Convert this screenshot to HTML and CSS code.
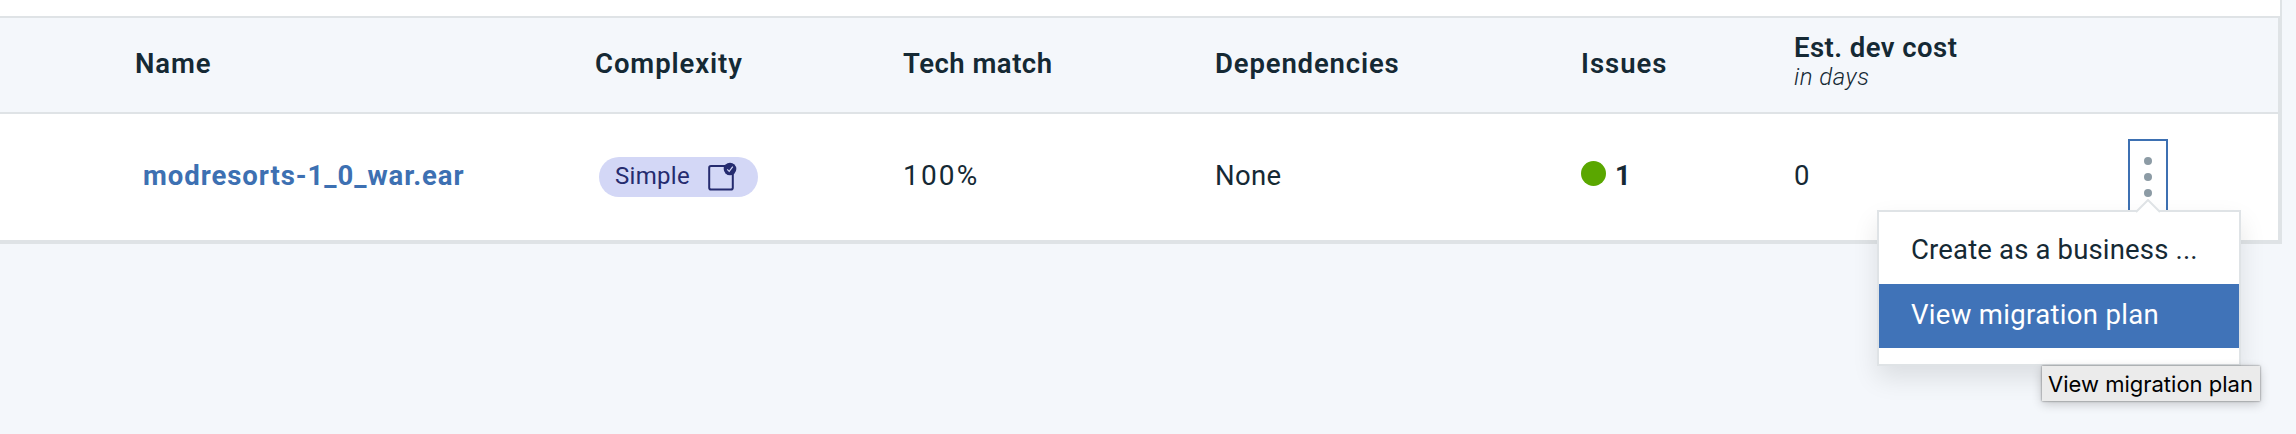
FILE: index.html
```
<!DOCTYPE html>
<html lang="en">
<head>
<meta charset="utf-8">
<title>Migration</title>
<link rel="stylesheet" href="styles.css">
</head>
<body>
<main class="panel">
  <div class="table">
    <div class="row head">
      <div><span class="h-name">Name</span></div>
      <div><span class="h-complexity">Complexity</span></div>
      <div><span class="h-tech">Tech match</span></div>
      <div><span class="h-deps">Dependencies</span></div>
      <div><span class="h-issues">Issues</span></div>
      <div class="cost"><span class="h-cost">Est. dev cost</span><em class="unit">in days</em></div>
      <div></div>
    </div>
    <div class="row body">
      <div class="cell"><a class="link">modresorts-1_0_war.ear</a></div>
      <div><div class="chip"><span class="chip-text">Simple</span>
        <svg class="chip-icon" width="30" height="30" viewBox="0 0 30 30">
          <rect x="2.2" y="4" width="23.6" height="23.6" rx="1.8" fill="none" stroke="#252b6f" stroke-width="2"/>
          <circle cx="23" cy="7" r="6.3" fill="#252b6f"/>
          <path d="M20.2 7.4l2 2 3.6-4.8" fill="none" stroke="#d3d7f6" stroke-width="1.2"/>
        </svg></div></div>
      <div class="cell"><span class="percent">100%</span></div>
      <div class="cell"><span class="none">None</span></div>
      <div class="cell issues"><span class="dot"></span><b class="count">1</b></div>
      <div class="cell"><span class="zero">0</span></div>
      <div class="actions">
        <div class="overflow">
          <svg width="8" height="40" viewBox="0 0 8 40" fill="#8c9ba5"><circle cx="4" cy="4" r="4"/><circle cx="4" cy="20" r="4"/><circle cx="4" cy="36" r="4"/></svg>
        </div>
      </div>
    </div>
  </div>
</main>
<div class="menu">
  <svg class="caret" width="26" height="14" viewBox="0 0 26 14"><path d="M1 13L13 1L25 13V14H1Z" fill="#fff"/><path d="M1 13L13 1L25 13" fill="none" stroke="#dfe3e6" stroke-width="2"/></svg>
  <div class="item"><span class="create">Create as a business ...</span></div>
  <div class="item active"><span class="view">View migration plan</span></div>
</div>
<div class="tooltip"><span class="tip-text">View migration plan</span></div>
</body>
</html>
```
FILE: styles.css
```
* { box-sizing: border-box; }
body {
  margin: 0;
  height: 434px;
  overflow: hidden;
  background: #f4f7fb;
  color: #152934;
  font: 400 27.5px/36px Roboto, sans-serif;
  white-space: nowrap;
}
.panel {
  width: 2282px;
  height: 244px;
  padding-top: 16px;
  background: #fff;
  border-right: 2px solid #dfe3e6;
  border-bottom: 2px solid #dfe3e6;
}
.table {
  border: solid #dfe3e6;
  border-width: 2px 2px 2px 0;
}
.row {
  display: grid;
  grid-template-columns: 460px 308px 312px 366px 213px 334px 1fr;
  padding-left: 135px;
  align-items: center;
}
.head {
  height: 96px;
  padding-bottom: 2px;
  background: #f4f7fb;
  border-bottom: 2px solid #dfe3e6;
  font-weight: 600;
}
.h-name { letter-spacing: .9px; }
.h-complexity { letter-spacing: .9px; }
.h-tech { letter-spacing: .5px; }
.h-deps { letter-spacing: .85px; }
.h-issues { letter-spacing: 1px; }
.h-cost { letter-spacing: .45px; }
.body { height: 126px; }
.cell { padding-bottom: 2px; }
.cost { display: flex; flex-direction: column; padding-bottom: 5px; }
.cost .h-cost { line-height: 30px; }
.unit { font-size: 24px; line-height: 28px; font-weight: 300; letter-spacing: .5px; }
.link { margin-left: 8px; color: #3d70b2; font-weight: 700; letter-spacing: .95px; }
.percent { font-size: 28px; letter-spacing: 2.2px; }
.none { letter-spacing: .3px; }
.chip {
  display: flex;
  align-items: center;
  width: 159px;
  height: 40px;
  margin-left: 4px;
  padding-left: 16px;
  border-radius: 20px;
  background: #d3d7f6;
  color: #252b6f;
  font-size: 24px;
}
.chip-text { width: 92px; padding-bottom: 2px; letter-spacing: .3px; }
.issues { display: flex; align-items: center; gap: 9px; }
.dot { width: 25px; height: 25px; margin-bottom: 5px; border-radius: 50%; background: #5aa700; }
.actions { align-self: start; padding-top: 25px; }
.overflow {
  display: flex;
  justify-content: center;
  width: 40px;
  height: 76px;
  padding-top: 16px;
  border: 2px solid #3d70b2;
}
.menu {
  position: absolute;
  left: 1877px;
  top: 210px;
  width: 364px;
  height: 156px;
  padding-top: 8px;
  background: #fff;
  border: 2px solid #dfe3e6;
  box-shadow: 0 12px 24px rgba(0, 0, 0, .1);
}
.caret { position: absolute; left: 256px; top: -13px; }
.item { height: 64px; padding-left: 32px; line-height: 60px; }
.create { letter-spacing: .16px; }
.view { letter-spacing: .32px; }
.active { background: #4073b8; color: #fff; line-height: 61px; }
.tooltip {
  position: absolute;
  left: 2042px;
  top: 366px;
  width: 218px;
  height: 35px;
  padding-left: 6px;
  background: #ebebeb;
  box-shadow: 0 0 2px rgba(0, 0, 0, .55), 0 3px 10px rgba(0, 0, 0, .2);
  color: #000;
  font: 400 22px/36px Inter, sans-serif;
}
```
